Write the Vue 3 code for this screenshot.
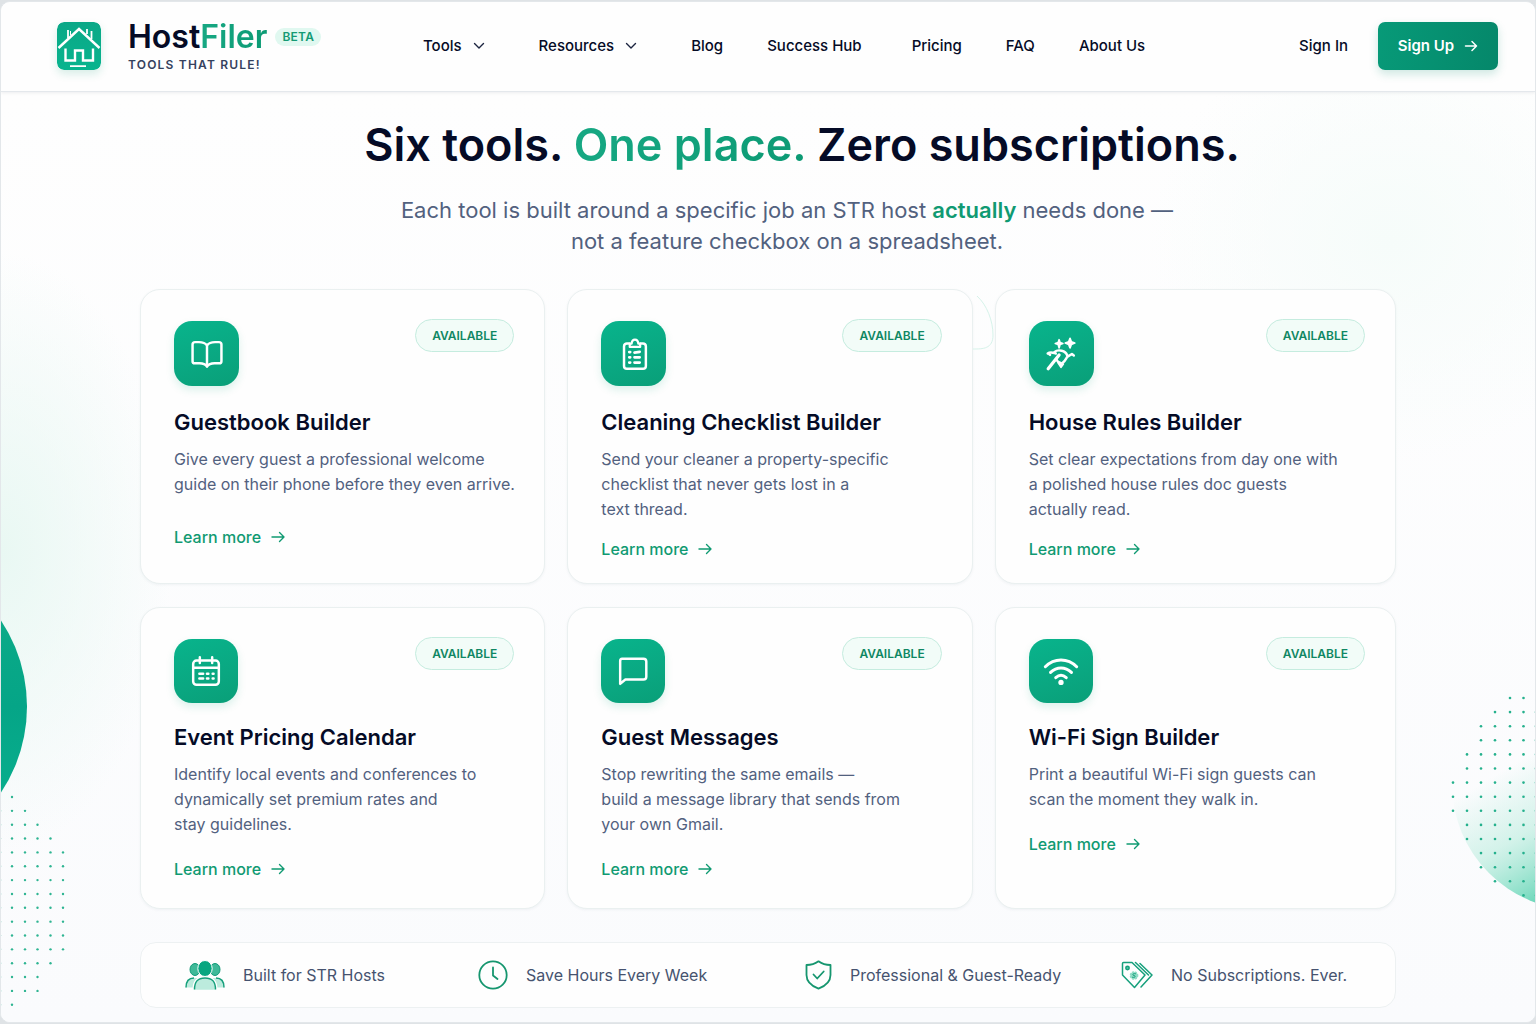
<script setup>
const navItems = [
  { label: 'Tools', menu: true },
  { label: 'Resources', menu: true },
  { label: 'Blog' },
  { label: 'Success Hub', wide: true },
  { label: 'Pricing' },
  { label: 'FAQ' },
  { label: 'About Us' },
]

const tools = [
  {
    icon: 'book',
    title: 'Guestbook Builder',
    text: 'Give every guest a professional welcome\nguide on their phone before they even arrive.',
    roomy: true,
  },
  {
    icon: 'clipboard',
    title: 'Cleaning Checklist Builder',
    text: 'Send your cleaner a property-specific\nchecklist that never gets lost in a\ntext thread.',
  },
  {
    icon: 'wand',
    title: 'House Rules Builder',
    text: 'Set clear expectations from day one with\na polished house rules doc guests\nactually read.',
  },
  {
    icon: 'calendar',
    title: 'Event Pricing Calendar',
    text: 'Identify local events and conferences to\ndynamically set premium rates and\nstay guidelines.',
    second: true,
  },
  {
    icon: 'message',
    title: 'Guest Messages',
    text: 'Stop rewriting the same emails —\nbuild a message library that sends from\nyour own Gmail.',
    second: true,
  },
  {
    icon: 'wifi',
    title: 'Wi-Fi Sign Builder',
    text: 'Print a beautiful Wi-Fi sign guests can\nscan the moment they walk in.',
    second: true,
  },
]

const perks = [
  { icon: 'people', label: 'Built for STR Hosts' },
  { icon: 'clock', label: 'Save Hours Every Week' },
  { icon: 'shield', label: 'Professional & Guest-Ready' },
  { icon: 'tags', label: 'No Subscriptions. Ever.' },
]

// Each column of a dot field: [x, first row, last row]
function dotField(columns, top, pitch) {
  return columns.flatMap(([x, first, last]) =>
    Array.from({ length: last - first + 1 }, (_, i) => ({ x, y: top + (first + i) * pitch })),
  )
}

const leftDots = dotField(
  [[0, 1, 15], [12, 0, 15], [25, 1, 14], [37.5, 2, 14], [50.5, 3, 12], [63, 4, 11]],
  3, 13.85,
)
const rightDots = dotField(
  [[3, 6, 8], [17, 4, 10], [31, 2, 12], [45, 1, 13], [60, 0, 13], [73.5, 0, 14], [86, 1, 14]],
  4, 14.1,
)
</script>

<template>
  <div class="page">
    <header class="topbar">
      <a class="brand" href="#">
        <svg class="brand-mark" viewBox="0 0 44 48" aria-hidden="true">
          <defs>
            <linearGradient id="markFill" x1="0" y1="0" x2="0" y2="1">
              <stop offset="0" stop-color="#0aa887" />
              <stop offset="1" stop-color="#08b48e" />
            </linearGradient>
          </defs>
          <rect width="44" height="48" rx="7" fill="url(#markFill)" />
          <g fill="none" stroke="#fff">
            <path d="M1.500 26 22 7l20.500 19" stroke-width="2.400" />
            <path d="M11 16V8M30 12V7M34.500 17V9" stroke-width="1.800" />
            <path d="M13.500 13V9" stroke-width="1" />
            <path d="M8.500 26.500v12H18V28.500h8v10h10v-12" stroke-width="2.400" />
            <path d="M13 44.200h16" stroke-width="1.800" />
          </g>
        </svg>
        <span class="brand-text">
          <span class="brand-line">
            <span class="brand-name">Host<span class="green">Filer</span></span>
            <span class="beta">BETA</span>
          </span>
          <span class="tagline">TOOLS THAT RULE!</span>
        </span>
      </a>

      <nav class="nav" aria-label="Main">
        <template v-for="item in navItems" :key="item.label">
          <button v-if="item.menu" type="button" class="nav-item menu">
            {{ item.label }}
            <svg width="12" height="8" viewBox="0 0 12 8" aria-hidden="true">
              <path d="M1.500 1.500 6 6l4.500-4.500" fill="none" stroke="#1c2540" stroke-width="1.400" stroke-linecap="round" stroke-linejoin="round" />
            </svg>
          </button>
          <a v-else href="#" class="nav-item" :class="{ wide: item.wide }">{{ item.label }}</a>
        </template>
      </nav>

      <div class="account">
        <a href="#" class="nav-item">Sign In</a>
        <button type="button" class="signup">
          Sign Up
          <svg width="14" height="12" viewBox="0 0 14 12" aria-hidden="true">
            <path d="M1.500 6h11M8 1.500 12.500 6 8 10.500" fill="none" stroke="#fff" stroke-width="1.500" stroke-linecap="round" stroke-linejoin="round" />
          </svg>
        </button>
      </div>
    </header>

    <main class="main">
      <div class="orb" aria-hidden="true"></div>
      <svg class="dots-left" width="70" height="216" viewBox="0 0 70 216" aria-hidden="true">
        <circle v-for="(d, i) in leftDots" :key="i" :cx="d.x" :cy="d.y" r="1.200" fill="#2fb592" />
      </svg>
      <svg class="dots-right" width="86" height="212" viewBox="0 0 86 212" aria-hidden="true">
        <defs>
          <linearGradient id="haze" gradientUnits="userSpaceOnUse" x1="40" y1="84" x2="106" y2="196">
            <stop offset="0" stop-color="#b9ecdd" stop-opacity="0" />
            <stop offset="0.500" stop-color="#b9ecdd" stop-opacity="0.600" />
            <stop offset="1" stop-color="#6fd8bb" />
          </linearGradient>
        </defs>
        <circle cx="128" cy="90" r="126" fill="url(#haze)" />
        <circle v-for="(d, i) in rightDots" :key="i" :cx="d.x" :cy="d.y" r="1.300" fill="#25b18d" />
      </svg>

      <section class="hero">
        <h1>Six tools. <span class="green">One place.</span> Zero subscriptions.</h1>
        <p>
          Each tool is built around a specific job an STR host <strong>actually</strong> needs done —<br />
          not a feature checkbox on a spreadsheet.
        </p>
      </section>

      <section class="tools">
        <svg class="swirl" width="24" height="60" viewBox="0 0 24 60" aria-hidden="true">
          <path d="M4 3C14 12 20 28 20 42S10 56 0 56" fill="none" stroke="#d6f3ea" />
        </svg>
        <article v-for="tool in tools" :key="tool.title" class="card" :class="{ roomy: tool.roomy, second: tool.second }">
          <div class="card-head">
            <span class="tile">
              <svg width="38" height="38" viewBox="0 0 40 40" fill="none" stroke="#fff" stroke-width="2.600" stroke-linecap="round" stroke-linejoin="round" aria-hidden="true">
                <template v-if="tool.icon === 'book'">
                  <path d="M20 11C18 8 14.500 7.500 11.500 7.500H7.500C5.500 7.500 4.800 8.500 4.800 10V27.500c0 1.500.8 2.300 2.300 2.300h4.900c4 0 6.500 1 8 3.500 1.500-2.500 4-3.500 8-3.500h4.900c1.500 0 2.300-.8 2.300-2.300V10C35.200 8.500 34.500 7.500 32.500 7.500h-4C25.500 7.500 22 8 20 11zM20 11V32.500" />
                </template>
                <template v-else-if="tool.icon === 'clipboard'">
                  <path d="M15 9h-2.500c-1.700 0-3 1-3 3v20.500c0 2 1 3 3 3h17c2 0 3-1 3-3V12c0-2-1.300-3-3-3H27" />
                  <path d="M15.500 12.500V9h2c.5-5.500 6.500-5.500 7 0h2v3.500z" stroke-width="2.300" />
                  <path d="M15 18h1M20.500 18.500l5.500-.8M15 23.500h1M20.500 23.500H26M15 29h1M20.500 29H26" stroke-width="2.800" />
                </template>
                <template v-else-if="tool.icon === 'wand'">
                  <path d="M6.500 35.500 18 21" stroke-width="3.400" />
                  <path d="M6 19.500C9 17 11.500 18.500 14.500 19.500M7 19.500l1.500 1.500M13 18c4-3.500 12-1.500 13.500 3.500M21.500 29.500c3-2 4-5 5-6.500l5-3 2 1.500M15 25.500c1 2.500 3 3.500 4.500 4" stroke-width="2.600" />
                  <path d="m17 29.500 3 4.500 2.500-3.500z" fill="#fff" stroke-width="1.800" />
                  <path d="m18 5 1 3 3 1-3 1-1 3.500-1-3.500-3-1 3-1zM29.500 3.500l1.400 3.600 3.600 1.400-3.600 1.400-1.400 3.600-1.400-3.600-3.600-1.400 3.600-1.400z" fill="#fff" stroke-width="1.800" />
                </template>
                <template v-else-if="tool.icon === 'calendar'">
                  <rect x="6.500" y="9" width="27" height="25.500" rx="3.500" />
                  <path d="M13.500 5.500v6M26.500 5.500v6M6.500 16.500h27" />
                  <path d="M13 23h4M21 23h1.500M27 23h1M13 28h4M21 28h1.500M27 28h1" stroke-width="2.600" />
                </template>
                <template v-else-if="tool.icon === 'message'">
                  <path d="M8.500 7h22.500c2 0 3 1 3 3v16c0 2-1 3-3 3H12L6.500 33.500V9.500C6.500 8 7.200 7 8.500 7z" />
                </template>
                <template v-else>
                  <path d="M3.500 15.500C13 6 27 6 36.500 15.500M9 21.500c6.500-6.200 15.500-6.200 22 0M14.500 27c3.500-3.200 7.500-3.200 11 0" stroke-width="3.200" />
                  <circle cx="20" cy="32" r="2.800" fill="#fff" stroke="none" />
                </template>
              </svg>
            </span>
            <span class="badge">AVAILABLE</span>
          </div>
          <h2>{{ tool.title }}</h2>
          <p>{{ tool.text }}</p>
          <a href="#" class="more">
            Learn more
            <svg width="14" height="12" viewBox="0 0 14 12" aria-hidden="true">
              <path d="M1 6h12M8.500 1.500 13 6l-4.500 4.500" fill="none" stroke="#109a72" stroke-width="1.400" stroke-linecap="round" stroke-linejoin="round" />
            </svg>
          </a>
        </article>
      </section>

      <ul class="perks">
        <li v-for="perk in perks" :key="perk.label">
          <svg v-if="perk.icon === 'people'" width="40" height="30" viewBox="0 0 40 30" aria-hidden="true">
            <g fill="#3fb998" stroke="#109a78">
              <ellipse cx="10" cy="9.500" rx="5" ry="6" />
              <ellipse cx="30" cy="9.500" rx="5" ry="6" />
            </g>
            <g fill="#bcebdd" stroke="#16a07c" stroke-width="1.500">
              <path d="M1 27.500c0-6.500 3-9.500 9-9.500h4v9.500zM39 27.500c0-6.500-3-9.500-9-9.500h-4v9.500z" stroke="none" />
              <path d="M1 27.500c0-6.500 3-9.500 8-9.500M39 27.500c0-6.500-3-9.500-8-9.500" fill="none" />
              <path d="M9.500 29.500c0-8 3-11.500 10.500-11.500s10.500 3.500 10.500 11.500" stroke="#fff" stroke-width="4" />
              <path d="M9.500 29.500c0-8 3-11.500 10.500-11.500s10.500 3.500 10.500 11.500" />
            </g>
            <ellipse cx="20" cy="8.500" rx="7.200" ry="8" fill="#08a680" stroke="#fff" />
          </svg>
          <svg v-else-if="perk.icon === 'clock'" width="30" height="30" viewBox="0 0 30 30" fill="none" stroke="#16966f" stroke-width="1.800" stroke-linecap="round" stroke-linejoin="round" aria-hidden="true">
            <circle cx="15" cy="15" r="13.700" />
            <path d="M15 7.500V15.500l4.500 3.500" />
          </svg>
          <svg v-else-if="perk.icon === 'shield'" width="27" height="30" viewBox="0 0 27 30" fill="none" stroke="#16966f" stroke-width="1.800" stroke-linecap="round" stroke-linejoin="round" aria-hidden="true">
            <path d="M13.500 1.300C10 3.800 6 5 1.500 5v10c0 6.500 5 11 12 13.700 7-2.700 12-7.200 12-13.700V5c-4.500 0-8.500-1.200-12-3.700z" />
            <path d="m8.500 14.500 3.700 4 6.500-7" />
          </svg>
          <svg v-else width="32" height="28" viewBox="0 0 32 28" fill="none" stroke="#16a07c" stroke-width="1.500" stroke-linecap="round" stroke-linejoin="round" aria-hidden="true">
            <path d="M1.500 2.500c0-.6.400-1 1-1H11L24 14 13.500 26.500 1.500 14z" />
            <path d="M19 2.500 31 14 20 26M14.500 1.500 27.500 14" />
            <circle cx="6.500" cy="7" r="1.700" fill="#4fc4a4" />
            <circle cx="13" cy="14.500" r="3.600" fill="#8fdcc5" stroke="#8fdcc5" stroke-dasharray="1 2" />
            <path d="M14.500 12.700c-3-.8-3.500 1.600-1.500 1.800s1.500 2.600-1.500 1.800" stroke-width="1" />
          </svg>
          <span>{{ perk.label }}</span>
        </li>
      </ul>
    </main>
  </div>
</template>

<style>
body {
  background: #dfe3e6;
}
</style>

<style scoped>
* {
  box-sizing: border-box;
}

.page {
  min-height: calc(100vh - 3px);
  border: 1px solid #e3e7ea;
  margin: 1px 0 2px;
  border-radius: 10px;
  overflow: hidden;
  display: flex;
  flex-direction: column;
  font-family: Inter, "Liberation Sans", sans-serif;
  color: #050b26;
  background: #fbfcfd;
}

a {
  color: inherit;
  text-decoration: none;
}

button {
  border: 0;
  background: none;
  font: inherit;
  color: inherit;
  cursor: pointer;
}

.green {
  background: linear-gradient(90deg, #17a883, #0c9a74);
  background-clip: text;
  color: transparent;
}

.topbar {
  position: relative;
  z-index: 1;
  display: flex;
  align-items: center;
  height: 90px;
  padding: 0 37px 2px 56px;
  background: #fefefe;
  border-bottom: 1px solid #e4e8ec;
  box-shadow: 0 1px 3px rgba(20, 40, 70, 0.08);
}

.brand {
  display: flex;
  align-items: center;
  gap: 27px;
  width: 366px;
}

.brand-mark {
  width: 44px;
  height: 48px;
  border-radius: 7px;
  box-shadow: 0 4px 8px rgba(10, 150, 115, 0.16);
}

.brand-text {
  display: flex;
  flex-direction: column;
}

.brand-line {
  display: flex;
  align-items: center;
  gap: 8px;
}

.brand-name {
  font-size: 32px;
  font-weight: 600;
  line-height: 38px;
}

.beta {
  padding: 0 7px;
  border-radius: 9px;
  background: #e0f8f0;
  color: #149a74;
  font-size: 12px;
  font-weight: 600;
  line-height: 18px;
  letter-spacing: 0.02em;
}

.tagline {
  color: #35415e;
  font-size: 12px;
  font-weight: 600;
  line-height: 18px;
  letter-spacing: 0.1em;
}

.nav {
  display: flex;
  align-items: center;
  gap: 44px;
}

.nav-item {
  display: flex;
  align-items: center;
  gap: 11px;
  padding: 0;
  font-size: 15px;
  font-weight: 500;
  line-height: 24px;
  white-space: nowrap;
}

.menu {
  padding-right: 10px;
}

.wide {
  padding-right: 6px;
}

.account {
  display: flex;
  align-items: center;
  gap: 30px;
  margin-left: auto;
}

.signup {
  display: flex;
  align-items: center;
  justify-content: center;
  gap: 10px;
  width: 120px;
  height: 48px;
  padding: 0;
  border-radius: 7px;
  background: linear-gradient(100deg, #079a78, #05876a);
  color: #fff;
  font-size: 15px;
  font-weight: 600;
  box-shadow: 0 4px 10px rgba(8, 140, 108, 0.2);
}

.main {
  position: relative;
  flex: 1;
  padding: 24px 24px 14px;
  background:
    radial-gradient(ellipse 170px 300px at 0 460px, #e9f8f3, rgba(233, 248, 243, 0)),
    radial-gradient(ellipse 240px 220px at 1390px 150px, #f6fcfa, rgba(246, 252, 250, 0)),
    linear-gradient(#fefefe, #fafbfd);
}

.orb {
  position: absolute;
  top: 459px;
  left: -285px;
  width: 311px;
  height: 311px;
  border-radius: 50%;
  background: linear-gradient(#0fae88, #05a587 50%, #0bb491);
}

.dots-left {
  position: absolute;
  top: 702px;
  left: -1px;
}

.dots-right {
  position: absolute;
  top: 602px;
  right: -1px;
}

.hero {
  position: relative;
  padding-left: 38px;
  text-align: center;
}

.hero h1 {
  margin: 0;
  padding-left: 30px;
  font-size: 45px;
  font-weight: 600;
  line-height: 58px;
}

.hero p {
  margin: 21px 0 0;
  color: #52617e;
  font-size: 22px;
  line-height: 31px;
}

.hero strong {
  color: #109a72;
  font-weight: 600;
}

.tools {
  position: relative;
  display: grid;
  grid-template-columns: 405fr 405fr 401fr;
  gap: 23px 22px;
  max-width: 1256px;
  margin: 32px auto 0;
}

.swirl {
  position: absolute;
  top: 4px;
  left: 833px;
}

.card {
  display: flex;
  flex-direction: column;
  align-items: flex-start;
  min-width: 0;
  padding: 31px 30px 22px 33px;
  border: 1px solid #eaf0f0;
  border-radius: 20px;
  background: #fefefe;
  box-shadow: 0 1px 3px rgba(20, 60, 70, 0.05);
}

.card-head {
  display: flex;
  align-items: flex-start;
  justify-content: space-between;
  width: 100%;
}

.tile {
  display: flex;
  align-items: center;
  justify-content: center;
  width: 65px;
  height: 65px;
  border-radius: 18px;
  background: linear-gradient(160deg, #08b48c, #0aa781 60%, #099f78);
  box-shadow: 0 4px 8px rgba(10, 160, 120, 0.14);
}

.badge {
  margin-top: -2px;
  padding: 0 16px;
  border: 1px solid #c5ecdf;
  border-radius: 17px;
  background: #f2fcf8;
  color: #0f8763;
  font-size: 12px;
  font-weight: 600;
  line-height: 31px;
}

.card h2 {
  margin: 21px 0 0;
  font-size: 22px;
  font-weight: 600;
  line-height: 30px;
}

.card p {
  margin: 10px 0 0;
  color: #52617e;
  font-size: 16px;
  line-height: 25px;
  white-space: pre;
}

.more {
  display: flex;
  align-items: center;
  gap: 10px;
  margin-top: 15px;
  color: #109a72;
  font-size: 16px;
  font-weight: 500;
  line-height: 24px;
}

.roomy .more {
  margin-top: 28px;
}

.second {
  padding-bottom: 27px;
}

.second .tile {
  width: 64px;
  height: 64px;
}

.second h2 {
  margin-top: 19px;
}

.second .more {
  margin-top: 20px;
}

.perks {
  position: relative;
  display: grid;
  grid-template-columns: 293fr 327fr 316fr 230fr;
  align-items: center;
  max-width: 1256px;
  height: 66px;
  margin: 33px auto 0;
  padding: 0 44px;
  border: 1px solid #edf1f2;
  border-radius: 16px;
  background: #fefefe;
  list-style: none;
}

.perks li {
  display: flex;
  align-items: center;
  gap: 18px;
  color: #46536f;
  font-size: 16px;
  white-space: nowrap;
}
</style>
